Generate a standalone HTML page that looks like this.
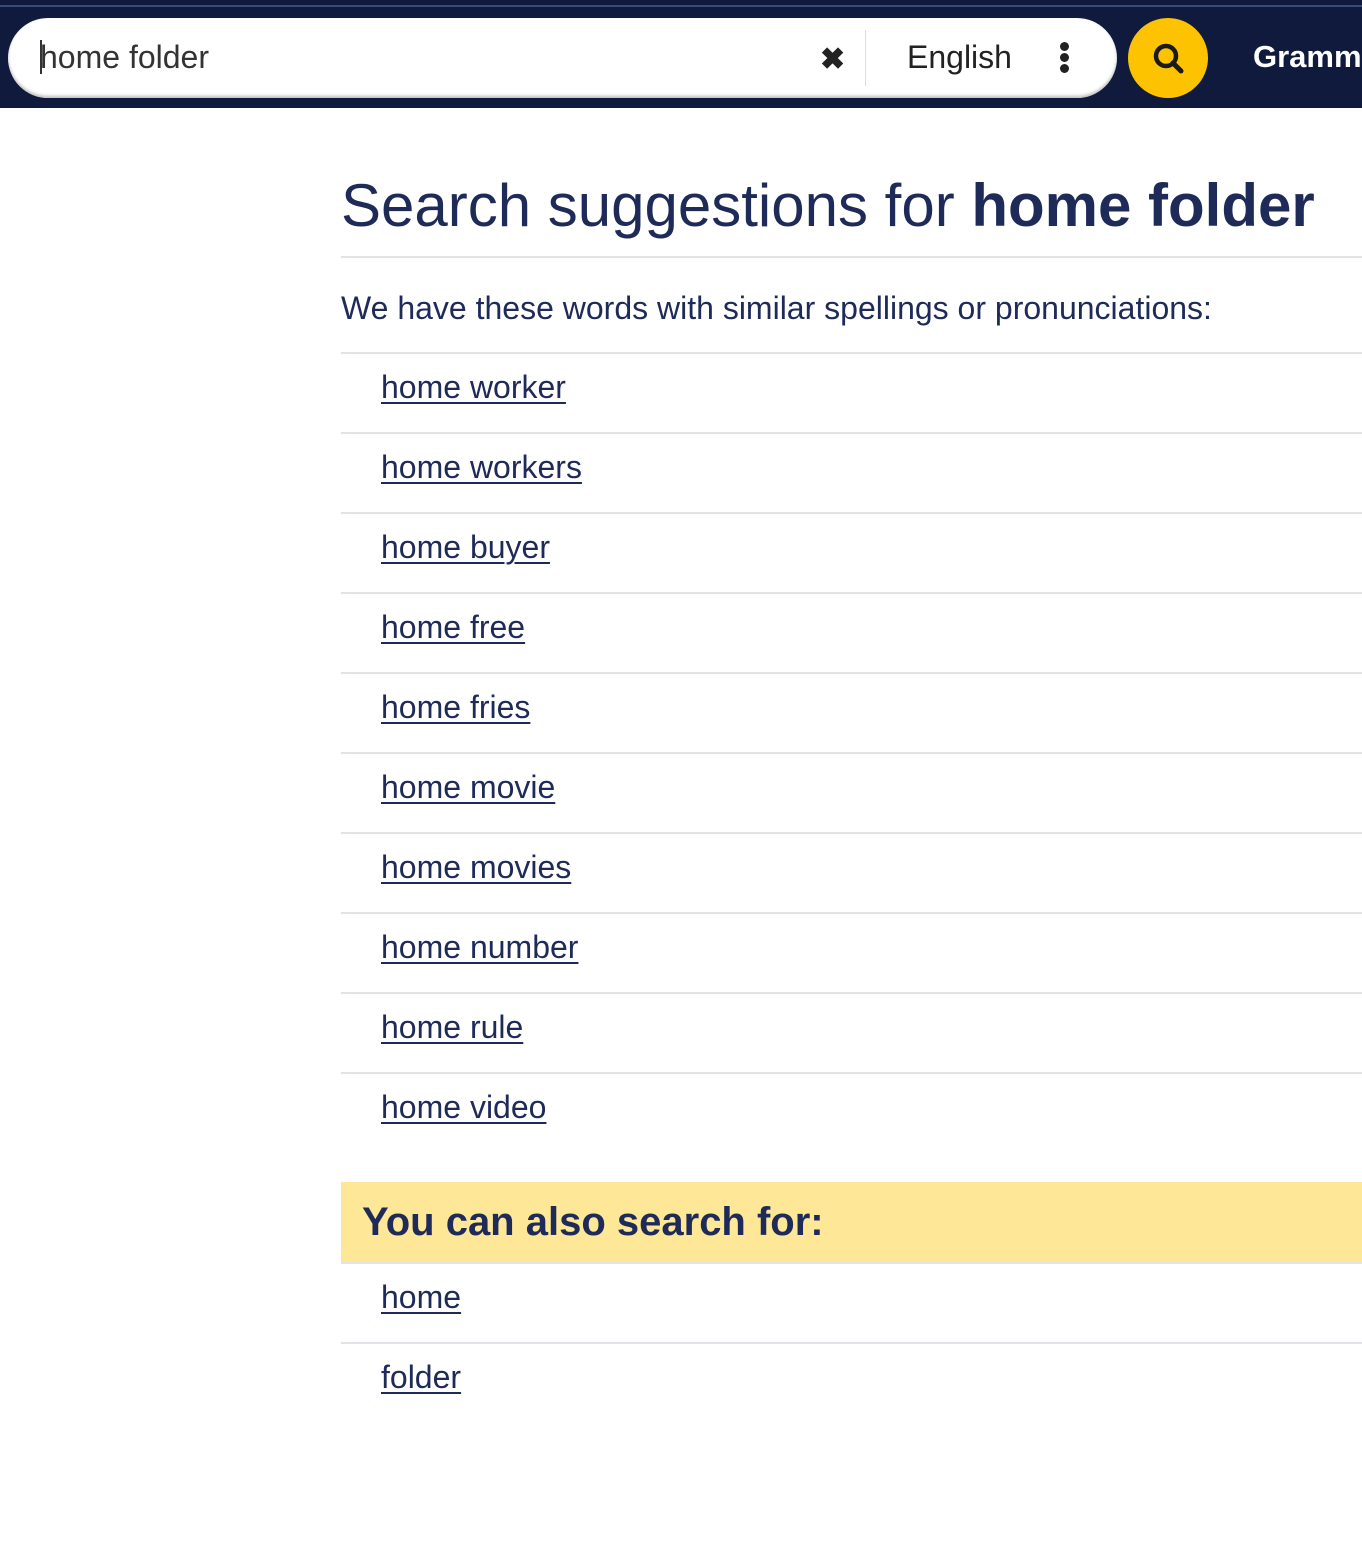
<!DOCTYPE html>
<html><head><style>
*{margin:0;padding:0;box-sizing:border-box}
body{width:1362px;height:1566px;background:#fff;font-family:"Liberation Sans",Arial,sans-serif;color:#1e2a58;position:relative;overflow:hidden}
.hdr{position:absolute;left:0;top:0;width:1362px;height:108px;background:#0f1a3d}
.hdr .ln{position:absolute;left:0;top:5px;width:100%;height:2px;background:#3a4a78}
.box{position:absolute;left:8px;top:18px;width:1109px;height:80px;background:#fff;border-radius:40px;box-shadow:inset 0 -2px 3px #bbb}
.q{position:absolute;left:40px;top:37px;font-size:32px;color:#333;line-height:40px}
.cur{position:absolute;left:40px;top:40px;width:2px;height:34px;background:#333}
.x{position:absolute;left:820px;top:38px;font-size:30px;font-weight:bold;color:#222;line-height:44px}
.sep{position:absolute;left:865px;top:30px;width:1px;height:56px;background:#ddd}
.en{position:absolute;left:907px;top:37px;font-size:32px;color:#222;line-height:40px}
.dots{position:absolute;left:1060px;top:42px}
.dots i{display:block;width:9px;height:9px;border-radius:50%;background:#222;margin-bottom:2px}
.go{position:absolute;left:1128px;top:18px;width:80px;height:80px;border-radius:50%;background:#fdc300}
.gram{position:absolute;left:1253px;top:37px;font-size:31px;font-weight:bold;color:#fff;line-height:40px;white-space:nowrap}
h1{position:absolute;left:341px;top:170px;font-size:60px;font-weight:normal;line-height:72px;white-space:nowrap}
.hr{position:absolute;left:341px;right:0;height:2px;background:#e2e2e8}
.p{position:absolute;left:341px;top:289px;font-size:32px;line-height:38px;white-space:nowrap}
a{position:absolute;left:381px;font-size:32px;color:#1e2a58;text-decoration:underline;text-decoration-thickness:2px;text-underline-offset:4px;line-height:40px;white-space:nowrap}
.yb{position:absolute;left:341px;right:0;top:1182px;height:80px;background:#fee797}
.yb span{position:absolute;left:21px;top:18px;font-size:40px;font-weight:bold;line-height:44px}
</style></head><body>
<div class="hdr"><div class="ln"></div>
<div class="box"></div>
<div class="q">home folder</div><div class="cur"></div>
<div class="x">✖</div>
<div class="sep"></div>
<div class="en">English</div>
<div class="dots"><i></i><i></i><i></i></div>
<div class="go"><svg width="80" height="80" viewBox="0 0 80 80"><circle cx="38" cy="38" r="10" fill="none" stroke="#1a1a1a" stroke-width="4.5"/><line x1="45" y1="45" x2="53" y2="53" stroke="#1a1a1a" stroke-width="5" stroke-linecap="round"/></svg></div>
<div class="gram">Grammar</div>
</div>
<h1>Search suggestions for <b>home folder</b></h1>
<div class="hr" style="top:256px"></div>
<div class="p">We have these words with similar spellings or pronunciations:</div>
<div class="hr" style="top:352px"></div>
<a style="top:367px">home worker</a>
<div class="hr" style="top:432px"></div>
<a style="top:447px">home workers</a>
<div class="hr" style="top:512px"></div>
<a style="top:527px">home buyer</a>
<div class="hr" style="top:592px"></div>
<a style="top:607px">home free</a>
<div class="hr" style="top:672px"></div>
<a style="top:687px">home fries</a>
<div class="hr" style="top:752px"></div>
<a style="top:767px">home movie</a>
<div class="hr" style="top:832px"></div>
<a style="top:847px">home movies</a>
<div class="hr" style="top:912px"></div>
<a style="top:927px">home number</a>
<div class="hr" style="top:992px"></div>
<a style="top:1007px">home rule</a>
<div class="hr" style="top:1072px"></div>
<a style="top:1087px">home video</a>
<div class="yb"><span>You can also search for:</span></div>
<div class="hr" style="top:1262px"></div>
<a style="top:1277px">home</a>
<div class="hr" style="top:1342px"></div>
<a style="top:1357px">folder</a>
</body></html>
